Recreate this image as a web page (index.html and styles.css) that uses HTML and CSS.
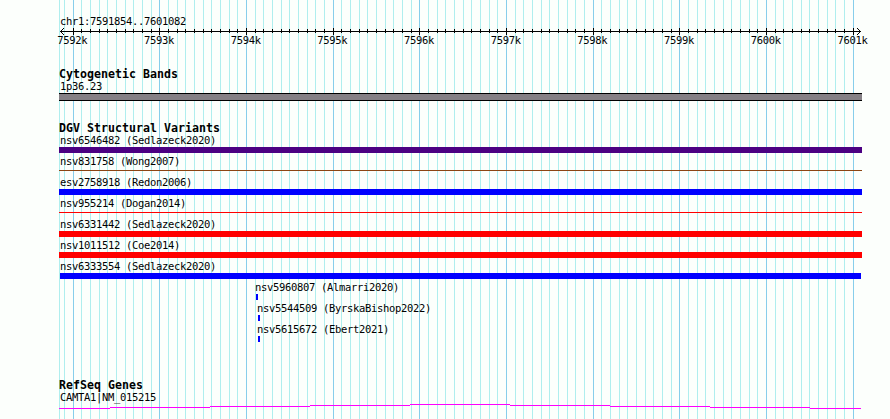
FILE: index.html
```
<!DOCTYPE html>
<html lang="en">
<head>
    <meta charset="UTF-8">
    <meta name="viewport" content="width=device-width, initial-scale=1.0">
    <title>chr1:7591854..7601082</title>
    <link rel="stylesheet" href="styles.css">
</head>
<body>
    <div class="browser">
        <!-- Ruler -->
        <div class="ruler">
            <div class="label region">chr1:7591854..7601082</div>
            <svg class="axis" width="803" height="7" viewBox="0 0 803 7" shape-rendering="crispEdges">
                <defs>
                    <pattern id="minor" x="14" width="26" height="7" patternUnits="userSpaceOnUse">
                        <path d="M0 1h1v4h-1zM8 1h1v4h-1zM17 1h1v4h-1z"/>
                    </pattern>
                    <pattern id="major" x="14" width="260" height="7" patternUnits="userSpaceOnUse">
                        <path d="M0 0h1v7h-1zM86 0h1v7h-1zM173 0h1v7h-1z"/>
                    </pattern>
                </defs>
                <rect x="6" width="789" height="7" fill="url(#minor)"/>
                <rect x="6" width="789" height="7" fill="url(#major)"/>
                <path d="M1 3h801v1h-801z"/>
                <path d="M2 2h1v1h-1zM3 1h1v1h-1zM4 0h1v1h-1zM2 4h1v1h-1zM3 5h1v1h-1zM4 6h1v1h-1z"/>
                <path d="M800 2h1v1h-1zM799 1h1v1h-1zM798 0h1v1h-1zM800 4h1v1h-1zM799 5h1v1h-1zM798 6h1v1h-1z"/>
            </svg>
            <div class="ticks">
                <span>7592k</span>
                <span>7593k</span>
                <span>7594k</span>
                <span>7595k</span>
                <span>7596k</span>
                <span>7597k</span>
                <span>7598k</span>
                <span>7599k</span>
                <span>7600k</span>
                <span>7601k</span>
            </div>
        </div>

        <!-- Cytogenetic Bands -->
        <div class="track bands">
            <h2>Cytogenetic Bands</h2>
            <div class="label">1p36.23</div>
            <div class="band"></div>
        </div>

        <!-- DGV Structural Variants -->
        <div class="track variants">
            <h2>DGV Structural Variants</h2>
            <div class="row"><div class="label">nsv6546482 (Sedlazeck2020)</div><div class="bar complex"></div></div>
            <div class="row"><div class="label">nsv831758 (Wong2007)</div><div class="bar thin mixed"></div></div>
            <div class="row"><div class="label">esv2758918 (Redon2006)</div><div class="bar gain"></div></div>
            <div class="row"><div class="label">nsv955214 (Dogan2014)</div><div class="bar thin loss"></div></div>
            <div class="row"><div class="label">nsv6331442 (Sedlazeck2020)</div><div class="bar loss"></div></div>
            <div class="row"><div class="label">nsv1011512 (Coe2014)</div><div class="bar loss"></div></div>
            <div class="row"><div class="label">nsv6333554 (Sedlazeck2020)</div><div class="bar gain inner"></div></div>
            <div class="row" style="margin-left: 195px"><div class="label">nsv5960807 (Almarri2020)</div><div class="bar gain short"></div></div>
            <div class="row" style="margin-left: 197px"><div class="label">nsv5544509 (ByrskaBishop2022)</div><div class="bar gain short"></div></div>
            <div class="row" style="margin-left: 197px"><div class="label">nsv5615672 (Ebert2021)</div><div class="bar gain short"></div></div>
        </div>

        <!-- RefSeq Genes -->
        <div class="track genes">
            <h2>RefSeq Genes</h2>
            <div class="label">CAMTA1|NM_015215</div>
            <svg class="gene" width="803" height="5" viewBox="0 0 803 5" shape-rendering="crispEdges">
                <path fill="#ff00ff" d="M0 4h51v1h-51zM51 3h100v1h-100zM151 2h100v1h-100zM251 1h100v1h-100zM351 0h100v1h-100zM451 1h100v1h-100zM551 2h100v1h-100zM651 3h100v1h-100zM751 4h51v1h-51z"/>
            </svg>
        </div>
    </div>
</body>
</html>
```
FILE: styles.css
```
body {
    margin: 0;
    background: #fcfffc;
    color: #000;
    font-family: "DejaVu Sans Mono", monospace;
    overflow: hidden;
}

.browser {
    width: 795px;
    height: 419px;
    margin-left: 59px;
    /* left edge, 1k lines, 100bp lines */
    background-image:
        linear-gradient(#afeeee, #afeeee),
        linear-gradient(to right, #87ceeb 1px, transparent 1px, transparent 86px, #87ceeb 86px, #87ceeb 87px, transparent 87px, transparent 173px, #87ceeb 173px, #87ceeb 174px, transparent 174px),
        linear-gradient(to right, #afeeee 1px, transparent 1px, transparent 8px, #afeeee 8px, #afeeee 9px, transparent 9px, transparent 17px, #afeeee 17px, #afeeee 18px, transparent 18px);
    background-size: 1px 100%, 260px 100%, 26px 100%;
    background-position: 0 0, 14px 0, 14px 0;
    background-repeat: no-repeat, repeat-x, repeat-x;
}

/* tracks run a little past the last grid line */
.ruler,
.track {
    width: 803px;
}

.label,
.ticks {
    font-size: 10.5px;
    letter-spacing: -0.32px;
    line-height: 12px;
    height: 12px;
    white-space: nowrap;
}

.label {
    padding-left: 1px;
}

.ruler {
    height: 68px;
    padding-top: 15px;
    box-sizing: border-box;
}

.axis {
    display: block;
    margin-top: 1px;
}

.ticks {
    display: flex;
    width: 866.67px;
    margin-top: -1px;
    margin-left: -30px;
}

.ticks span {
    flex: 1;
    text-align: center;
}

h2 {
    margin: 0;
    font-size: 11.6px;
    line-height: 12px;
    height: 12px;
    letter-spacing: 0.017px;
    white-space: nowrap;
}

.bands {
    height: 54px;
}

.band {
    height: 6px;
    margin-top: 1px;
    background: #858085;
    border-top: 1px solid #000;
    border-bottom: 1px solid #000;
}

.variants {
    height: 257px;
}

.row {
    height: 21px;
}

.row .label {
    padding-bottom: 1px;
}

.bar {
    height: 6px;
}

.thin {
    height: 1px;
    margin-top: 2px;
}

.inner {
    margin: 0 1px;
}

.short {
    width: 2px;
    margin-left: 2px;
}

.complex {
    background: #4b0082;
}

.mixed {
    background: #8b4513;
}

.gain {
    background: #0000ff;
}

.loss {
    background: #ff0000;
}

.gene {
    display: block;
    margin-top: 1px;
}
```
